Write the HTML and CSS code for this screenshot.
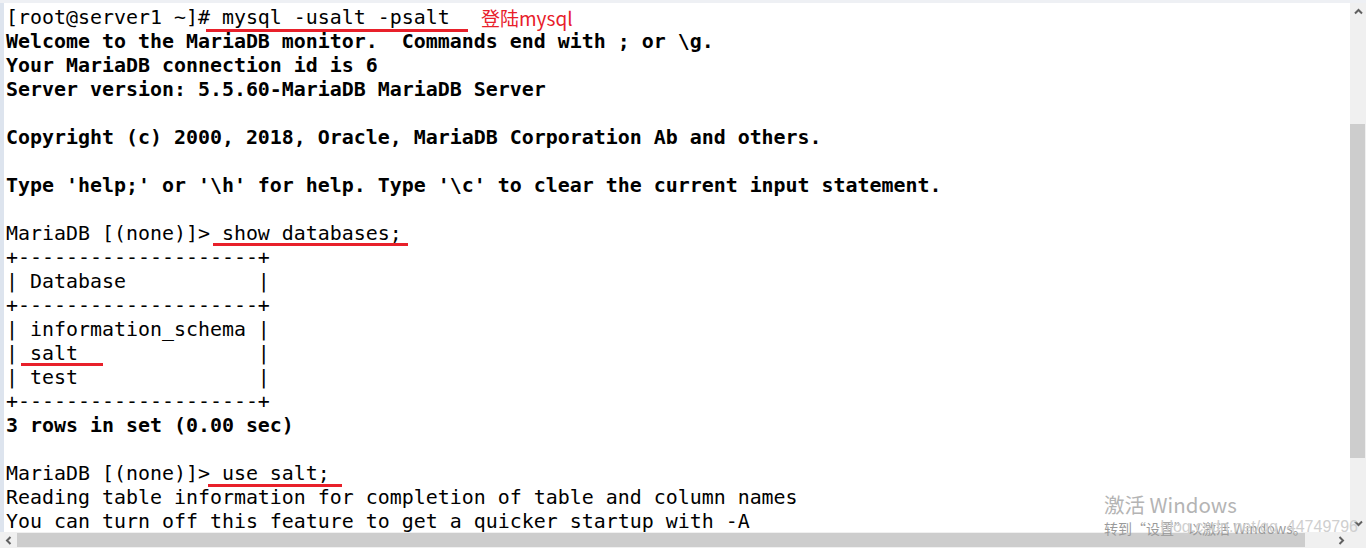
FILE: index.html
```html
<!DOCTYPE html>
<html>
<head>
<meta charset="utf-8">
<link rel="stylesheet" href="styles.css">
</head>
<body>
<div class="window">
  <div class="viewport">
<pre class="term">[root@server1 ~]# mysql -usalt -psalt
<b>Welcome to the MariaDB monitor.  Commands end with ; or \g.</b>
<b>Your MariaDB connection id is 6</b>
<b>Server version: 5.5.60-MariaDB MariaDB Server</b>

<b>Copyright (c) 2000, 2018, Oracle, MariaDB Corporation Ab and others.</b>

<b>Type 'help;' or '\h' for help. Type '\c' to clear the current input statement.</b>

MariaDB [(none)]&gt; show databases;
+--------------------+
| Database           |
+--------------------+
| information_schema |
| salt               |
| test               |
+--------------------+
<b>3 rows in set (0.00 sec)</b>

MariaDB [(none)]&gt; use salt;
Reading table information for completion of table and column names
You can turn off this feature to get a quicker startup with -A</pre>
    <span class="mark mark-login"></span>
    <span class="note">登陆mysql</span>
    <span class="mark mark-show"></span>
    <span class="mark mark-salt"></span>
    <span class="mark mark-use"></span>
  </div>
  <div class="vscroll">
    <div class="btn"><svg width="9" height="7" viewBox="0 0 9 7"><polyline points="1,5.5 4.5,2 8,5.5" fill="none" stroke="#606060" stroke-width="2"/></svg></div>
    <div class="vtrack"><div class="vthumb"></div></div>
    <div class="btn"><svg width="9" height="7" viewBox="0 0 9 7"><polyline points="1,1.5 4.5,5 8,1.5" fill="none" stroke="#606060" stroke-width="2"/></svg></div>
  </div>
  <div class="hscroll">
    <div class="btn hbtn"><svg width="7" height="9" viewBox="0 0 7 9"><polyline points="5.5,1 2,4.5 5.5,8" fill="none" stroke="#606060" stroke-width="2"/></svg></div>
    <div class="htrack"><div class="hthumb"></div></div>
    <div class="btn hbtn"><svg width="7" height="9" viewBox="0 0 7 9"><polyline points="1.5,1 5,4.5 1.5,8" fill="none" stroke="#606060" stroke-width="2"/></svg></div>
  </div>
  <div class="corner"></div>
  <div class="watermark">
    <div class="wm-title">激活 Windows</div>
    <div class="wm-sub">转到“设置”以激活 Windows。<span class="wm-url">blog.csdn.net/qq_44749796</span></div>
  </div>
</div>
</body>
</html>
```

FILE: styles.css
```css
html, body {
  margin: 0;
  padding: 0;
  background: #ffffff;
}
body {
  width: 1366px;
  height: 548px;
  overflow: hidden;
}
.window {
  position: relative;
  display: grid;
  grid-template-columns: 1fr 16px;
  grid-template-rows: 1fr 16px;
  width: 1366px;
  height: 548px;
  box-sizing: border-box;
  border-top: 3px solid #eef0f4;
}
.viewport {
  position: relative;
  overflow: hidden;
  background: #ffffff;
  border-left: 4px solid #dde4ee;
  padding: 3px 0 0 2px;
}
.term {
  margin: 0;
  font-family: "DejaVu Sans Mono", monospace;
  font-size: 19.93px;
  line-height: 24px;
  color: #000000;
  white-space: pre;
}
.term b {
  font-weight: bold;
}
.mark {
  position: absolute;
  height: 3px;
  background: #e8202a;
}
.mark-login { left: 202px; top: 26px; width: 262px; }
.mark-show  { left: 209px; top: 240px; width: 195px; }
.mark-salt  { left: 17px;  top: 360px; width: 82px; }
.mark-use   { left: 204px; top: 481px; width: 134px; }
.note {
  position: absolute;
  left: 477px;
  top: 5px;
  font-family: "Noto Sans CJK SC", "Noto Sans", sans-serif;
  font-size: 19px;
  line-height: 20px;
  color: #e8202a;
}
.watermark {
  position: absolute;
  left: 1104px;
  top: 487px;
  width: 254px;
  color: #b4b4b4;
  font-family: "Noto Sans CJK SC", "Noto Sans", sans-serif;
  white-space: nowrap;
  pointer-events: none;
}
.wm-title {
  font-size: 20.5px;
  line-height: 28px;
}
.wm-sub {
  position: relative;
  font-size: 14px;
  line-height: 20px;
  color: #9a9a9a;
}
.wm-url {
  position: absolute;
  right: 0;
  top: -1px;
  font-family: "Liberation Sans", sans-serif;
  font-size: 16px;
  color: #cfcfcf;
}
.vscroll {
  display: flex;
  flex-direction: column;
  background: #f0f0f0;
}
.btn {
  display: flex;
  align-items: center;
  justify-content: center;
  height: 17px;
  flex: none;
}
.vtrack {
  flex: 1;
  padding-top: 104px;
}
.vthumb {
  width: 15px;
  height: 334px;
  background: #cdcdcd;
}
.hscroll {
  display: flex;
  background: #f0f0f0;
}
.hbtn {
  width: 17px;
  height: 16px;
}
.htrack {
  flex: 1;
  display: flex;
  align-items: center;
}
.hthumb {
  width: 1288px;
  height: 14px;
  background: #cdcdcd;
}
.corner {
  background: #f0f0f0;
}
```
